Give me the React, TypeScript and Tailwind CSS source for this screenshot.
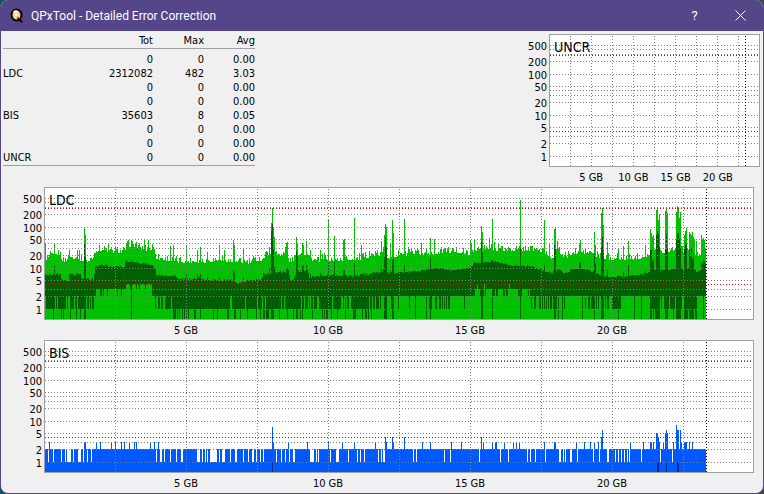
import { useId } from 'react';

type Point = [x: number, y: number];
type Peak = [x: number, max: number, avg: number];
type Column = { max: number; avg: number; min: number };

const PLOT_HEIGHT = 131;
const COLUMNS = 661;

const GRID_ROWS = [10, 14, 19, 26, 39, 51, 55, 60, 67, 80, 92, 101, 108, 121];
const LIMIT_ROWS = [20, 96];

const Y_TICKS = [
	{ label: '500', y: 11 },
	{ label: '200', y: 27 },
	{ label: '100', y: 40 },
	{ label: '50', y: 52 },
	{ label: '20', y: 68 },
	{ label: '10', y: 81 },
	{ label: '5', y: 93 },
	{ label: '2', y: 109 },
	{ label: '1', y: 122 },
];

const X_TICKS = [
	{ label: '5 GB', x: '20%' },
	{ label: '10 GB', x: '40%' },
	{ label: '15 GB', x: '60%' },
	{ label: '20 GB', x: '80%' },
];

const TOTALS = [
	{ name: '', tot: '0', max: '0', avg: '0.00' },
	{ name: 'LDC', tot: '2312082', max: '482', avg: '3.03' },
	{ name: '', tot: '0', max: '0', avg: '0.00' },
	{ name: '', tot: '0', max: '0', avg: '0.00' },
	{ name: 'BIS', tot: '35603', max: '8', avg: '0.05' },
	{ name: '', tot: '0', max: '0', avg: '0.00' },
	{ name: '', tot: '0', max: '0', avg: '0.00' },
	{ name: 'UNCR', tot: '0', max: '0', avg: '0.00' },
];

// column heights are in plot units, 41 units per decade
const LDC_MAX: Point[] = [
	[0, 61], [8, 62], [14, 66], [18, 58], [24, 62], [30, 62], [36, 60], [43, 58], [47, 61], [50, 68], [55, 70],
	[66, 68], [79, 68], [82, 74], [90, 74], [97, 70], [109, 70], [111, 62], [120, 60], [135, 58], [155, 58],
	[170, 59], [176, 60], [190, 57], [204, 57], [212, 60], [217, 60], [222, 66], [232, 65], [240, 66], [245, 57],
	[253, 66], [262, 66], [266, 60], [273, 58], [280, 63], [285, 59], [300, 60], [316, 61], [330, 65], [336, 64],
	[345, 62], [355, 65], [375, 65], [388, 66], [400, 68], [415, 68], [423, 65], [430, 70], [445, 71], [455, 70],
	[470, 70], [490, 70], [500, 67], [507, 61], [512, 69], [520, 62], [530, 67], [546, 67], [552, 63], [562, 61],
	[572, 61], [584, 60], [598, 63], [606, 66], [618, 68], [628, 70], [636, 68], [645, 66], [652, 65], [660, 66],
];

const LDC_AVG: Point[] = [
	[0, 45], [15, 45], [16, 39], [23, 39], [24, 45], [35, 45], [36, 40], [48, 40], [50, 52], [55, 54], [79, 52],
	[80, 58], [95, 56], [107, 54], [110, 50], [111, 44], [130, 43], [133, 40], [152, 40], [154, 43], [157, 39],
	[186, 39], [192, 36], [200, 38], [216, 39], [218, 45], [228, 46], [243, 48], [245, 38], [248, 40], [252, 47],
	[262, 48], [264, 42], [284, 44], [308, 43], [320, 45], [334, 47], [350, 46], [375, 48], [395, 51], [405, 49],
	[425, 51], [430, 56], [447, 58], [455, 56], [468, 53], [485, 53], [495, 49], [505, 46], [512, 50], [520, 46],
	[528, 50], [540, 50], [552, 45], [565, 42], [580, 43], [598, 45], [606, 49], [628, 50], [645, 50], [652, 47],
	[660, 55],
];

const LDC_PEAKS: Peak[] = [
	[0, 76, 45], [5, 68, 45], [9, 76, 53], [24, 69, 45], [32, 69, 45], [34, 69, 45], [39, 92, 76], [40, 84, 62],
	[63, 76, 52], [82, 78, 58], [86, 79, 59], [91, 77, 57], [99, 79, 56], [103, 79, 55], [107, 75, 54],
	[125, 73, 43], [128, 74, 43], [141, 74, 46], [152, 69, 45], [155, 72, 45], [162, 67, 42], [174, 74, 42],
	[179, 69, 40], [188, 79, 49], [189, 74, 46], [198, 71, 42], [220, 67, 45], [224, 72, 51], [226, 96, 88],
	[227, 111, 95], [228, 92, 71], [229, 82, 52], [240, 72, 46], [241, 76, 50], [242, 77, 51], [251, 82, 68],
	[252, 75, 62], [257, 76, 54], [258, 74, 53], [261, 78, 54], [265, 69, 45], [275, 69, 46], [283, 100, 56],
	[289, 83, 57], [298, 79, 48], [299, 80, 49], [309, 101, 56], [316, 74, 45], [324, 68, 45], [336, 78, 53],
	[338, 72, 50], [339, 84, 62], [340, 95, 82], [341, 92, 72], [345, 75, 48], [347, 99, 59], [348, 86, 60],
	[359, 100, 54], [363, 72, 48], [376, 76, 49], [381, 70, 50], [385, 81, 61], [389, 80, 51], [400, 71, 49],
	[425, 79, 52], [426, 75, 53], [429, 80, 57], [436, 93, 77], [437, 87, 67], [444, 81, 57], [447, 100, 59],
	[449, 77, 58], [453, 75, 57], [475, 119, 71], [499, 99, 54], [504, 76, 48], [509, 90, 74], [510, 92, 71],
	[512, 78, 50], [534, 76, 56], [535, 79, 57], [549, 87, 65], [550, 74, 55], [556, 106, 72], [557, 111, 82],
	[558, 94, 66], [562, 77, 49], [573, 71, 44], [578, 73, 47], [583, 78, 54], [600, 74, 48], [605, 90, 69],
	[606, 86, 71], [607, 82, 58], [608, 84, 60], [611, 109, 84], [612, 110, 88], [613, 99, 86], [614, 105, 72],
	[620, 108, 70], [621, 111, 85], [622, 106, 71], [627, 72, 50], [631, 107, 79], [632, 113, 86], [633, 111, 86],
	[634, 101, 80], [635, 107, 71], [637, 73, 51], [639, 84, 71], [640, 88, 75], [641, 91, 76], [642, 71, 51],
	[644, 87, 70], [645, 85, 64], [646, 84, 71], [647, 87, 60], [648, 82, 66], [649, 80, 50], [651, 78, 47],
	[656, 84, 57], [657, 80, 55], [658, 81, 59], [659, 79, 58],
];

// [first column, chance of 35, of 30, of 23, of 10], the rest reaches the floor
const LDC_MIN: number[][] = [
	[0, 0, 0, 0.35, 0.6],
	[50, 0, 0.75, 0.25, 0],
	[81, 0.8, 0.2, 0, 0],
	[107, 0, 0, 0.6, 0.4],
	[128, 0, 0, 0.04, 0.68],
	[212, 0, 0, 0.18, 0.62],
	[335, 0, 0, 0.82, 0.12],
	[385, 0, 0, 0.4, 0.6],
	[410, 0, 0, 0.97, 0.03],
	[430, 0.06, 0.66, 0.28, 0],
	[485, 0, 0, 0.45, 0.5],
	[512, 0, 0, 0.85, 0.1],
	[540, 0, 0, 0.6, 0.35],
	[567, 0, 0, 0, 0.95],
	[576, 0, 0, 0.85, 0.08],
	[600, 0, 0, 0.6, 0.3],
];

const BIS_GAPS: Point[] = [
	[3, 1], [8, 1], [16, 1], [20, 1], [22, 4], [28, 1], [33, 3], [38, 1], [42, 1], [46, 1], [111, 1], [115, 2],
	[119, 1], [125, 1], [131, 1], [136, 2], [152, 3], [157, 1], [160, 1], [162, 1], [165, 7], [174, 1], [177, 3],
	[185, 1], [190, 2], [198, 1], [203, 1], [207, 2], [211, 1], [215, 1], [218, 1], [231, 1], [236, 1], [240, 1],
	[244, 1], [248, 2], [265, 4], [271, 1], [273, 1], [285, 1], [291, 3], [303, 1], [309, 1], [312, 1], [315, 1],
	[319, 1], [333, 1], [336, 1], [338, 2], [368, 1], [371, 1], [399, 1], [405, 1], [434, 1], [455, 1], [463, 1],
	[482, 1], [485, 1], [490, 1], [500, 1], [514, 2], [518, 1], [520, 1], [525, 2], [532, 1], [548, 1], [554, 1],
	[562, 2], [570, 1], [573, 1], [576, 1], [579, 1], [582, 1], [584, 1], [596, 1], [615, 1], [627, 1],
];

const BIS_PEAKS: Peak[] = [
	[4, 30, 0], [39, 30, 0], [40, 30, 0], [51, 30, 0], [55, 30, 0], [66, 30, 0], [70, 30, 0], [76, 30, 0],
	[79, 30, 0], [84, 30, 0], [89, 30, 0], [91, 30, 0], [105, 30, 0], [109, 30, 0], [113, 30, 0], [227, 45, 10],
	[228, 29, 0], [243, 30, 0], [262, 30, 0], [283, 30, 0], [297, 30, 0], [309, 30, 0], [330, 30, 0],
	[340, 35, 0], [341, 30, 0], [347, 35, 0], [348, 30, 0], [359, 35, 0], [377, 30, 0], [385, 30, 0],
	[406, 30, 0], [416, 30, 0], [436, 35, 0], [438, 30, 0], [447, 30, 0], [450, 30, 0], [451, 30, 0],
	[459, 30, 0], [468, 30, 0], [471, 30, 0], [474, 30, 0], [499, 30, 0], [509, 30, 0], [510, 30, 0],
	[531, 30, 0], [539, 30, 0], [545, 30, 0], [549, 30, 0], [553, 30, 0], [556, 35, 0], [557, 42, 0],
	[585, 30, 0], [598, 30, 0], [605, 30, 0], [606, 30, 0], [608, 30, 0], [611, 39, 0], [612, 39, 10],
	[613, 35, 10], [614, 30, 0], [618, 30, 0], [620, 39, 0], [621, 42, 10], [622, 39, 0], [628, 30, 0],
	[631, 47, 0], [632, 42, 10], [633, 42, 10], [635, 42, 0], [636, 30, 0], [639, 30, 0], [640, 30, 0],
	[641, 30, 0], [644, 30, 0], [647, 30, 0],
];

const noise = (n: number) => {
	const value = Math.sin(n * 127.1 + 311.7) * 43758.5453;
	return value - Math.floor(value);
};

const interpolate = (points: Point[], x: number) => {
	const next = points.findIndex(([px]) => px >= x);
	if (next <= 0) return points[0][1];
	const [x0, y0] = points[next - 1];
	const [x1, y1] = points[next];
	return y0 + ((y1 - y0) * (x - x0)) / (x1 - x0);
};

const minLevel = (x: number) => {
	const zone = LDC_MIN.filter(([start]) => start <= x).pop() ?? LDC_MIN[0];
	let roll = noise(x + 5000);
	for (const [i, level] of [35, 30, 23, 10].entries()) {
		roll -= zone[i + 1];
		if (roll < 0) return level;
	}
	return 0;
};

const ldcColumns: Column[] = Array.from({ length: COLUMNS }, (_, x) => {
	const peak = LDC_PEAKS.find(([px]) => px === x);
	if (peak) return { max: peak[1], avg: peak[2], min: peak[2] >= 59 ? 0 : minLevel(x) };
	const roll = noise(x);
	return {
		max: Math.round(interpolate(LDC_MAX, x) - 2 + roll * roll * 7),
		avg: Math.round(interpolate(LDC_AVG, x) - 1 + noise(x + 900) * 2),
		min: minLevel(x),
	};
});

const bisColumns: Column[] = Array.from({ length: COLUMNS }, (_, x) => {
	const peak = BIS_PEAKS.find(([px]) => px === x);
	const gap = BIS_GAPS.some(([start, size]) => x >= start && x < start + size);
	return { max: peak ? peak[1] : gap ? 10 : 23, avg: peak ? peak[2] : 0, min: 0 };
});

const barsPath = (columns: Column[], key: keyof Column) =>
	columns.map((column, x) => (column[key] > 0 ? `M${x} ${PLOT_HEIGHT}v-${column[key]}h1v${column[key]}z` : '')).join('');

interface ChartProps {
	title: string;
	span: number;
	end: number;
	columns?: Column[];
	colors?: [max: string, avg: string, min: string];
}

const Chart = ({ title, span, end, columns = [], colors = ['#00c000', '#006000', '#00c000'] }: ChartProps) => {
	const titleId = useId();
	const step = Math.floor((span + 2) / 10);

	return (
		<figure className="flex w-full" aria-labelledby={titleId}>
			<svg className="h-[133px] w-[43px] shrink-0 text-[11px]" aria-hidden="true">
				{Y_TICKS.map(({ label, y }) => (
					<text key={label} x="41" y={y + 5} textAnchor="end">
						{label}
					</text>
				))}
			</svg>
			<div className="min-w-0 flex-1">
				<div className="relative border border-[#a0a0a0] bg-white">
					<svg
						className="block h-[131px] w-full"
						viewBox={`0 0 ${span} ${PLOT_HEIGHT}`}
						preserveAspectRatio="none"
						shapeRendering="crispEdges"
					>
						<path d={barsPath(columns, 'max')} fill={colors[0]} />
						<path d={barsPath(columns, 'avg')} fill={colors[1]} />
						<path d={barsPath(columns, 'min')} fill={colors[2]} />
						<g stroke="#808080" strokeDasharray="1 2">
							{GRID_ROWS.map((y) => (
								<line key={y} x1="0" x2={span} y1={y + 0.5} y2={y + 0.5} />
							))}
							{Array.from({ length: 9 }, (_, i) => (i + 1) * step - 0.5).map((x) => (
								<line key={x} x1={x} x2={x} y1="1" y2={PLOT_HEIGHT} />
							))}
						</g>
						<g stroke="#e00000" strokeDasharray="1 2">
							{LIMIT_ROWS.map((y) => (
								<line key={y} x1="0" x2={span} y1={y + 0.5} y2={y + 0.5} />
							))}
						</g>
						<line x1={end + 0.5} x2={end + 0.5} y1="1" y2={PLOT_HEIGHT} stroke="#000" strokeDasharray="1 2" />
					</svg>
					<figcaption id={titleId} className="absolute top-1 left-1 text-[14px] leading-4">
						{title}
					</figcaption>
				</div>
				<svg className="block h-5 w-full overflow-visible text-[11px]">
					{X_TICKS.map(({ label, x }) => (
						<text key={label} x={x} y="14" textAnchor="middle">
							{label}
						</text>
					))}
				</svg>
			</div>
		</figure>
	);
};

const Logo = () => (
	<svg className="size-4" viewBox="0 0 16 16" aria-hidden="true">
		<ellipse cx="7.500" cy="7" rx="5" ry="5.500" fill="#fbd27a" stroke="#000" strokeWidth="2" />
		<path d="M7.500 7L4 3.500a4.500 4.500 0 0 1 4.500-1z" fill="#fff6dc" />
		<path d="M7.500 7l4 2.500a4.500 4.500 0 0 1-4 2z" fill="#f4a838" />
		<circle cx="7.500" cy="7" r="1.500" fill="#fff" />
		<path d="M8.500 10.500c2 .5 2 3 5 3.500" fill="none" stroke="#000" strokeWidth="2" />
	</svg>
);

const TitleBar = () => (
	<header className="flex h-[31px] items-center bg-[#554589] pl-2 font-[Roboto,sans-serif] text-white">
		<Logo />
		<h1 className="ml-[6px] flex-1 text-[12px] leading-4">QPxTool - Detailed Error Correction</h1>
		<button type="button" aria-label="Help" className="flex h-full w-[45px] items-center justify-center text-[13px]">
			?
		</button>
		<button type="button" aria-label="Close" className="flex h-full w-[46px] items-center justify-center">
			<svg className="size-[11px]" viewBox="0 0 11 11" stroke="currentColor" aria-hidden="true">
				<path d="M.5.5l10 10M10.500.5l-10 10" />
			</svg>
		</button>
	</header>
);

const TotalsTable = () => (
	<table className="w-[252px] table-fixed border-b border-[#a0a0a0] text-right text-[11px] leading-[14px]">
		<thead>
			<tr className="border-b border-[#a0a0a0]">
				<th className="w-[80px]" />
				<th className="font-normal">Tot</th>
				<th className="w-[51px] font-normal">Max</th>
				<th className="w-[51px] font-normal">Avg</th>
			</tr>
		</thead>
		<tbody className="before:block before:h-1">
			{TOTALS.map(({ name, tot, max, avg }, i) => (
				<tr key={i}>
					<th className="text-left font-normal">{name}</th>
					<td>{tot}</td>
					<td>{max}</td>
					<td>{avg}</td>
				</tr>
			))}
		</tbody>
	</table>
);

export default function App() {
	return (
		<div className="min-h-screen bg-linear-to-r from-[#0f5a54] to-[#3a4444]">
			<div className="flex min-h-screen flex-col overflow-hidden rounded-lg border-x border-b border-[#554589] bg-[#f0f0f0] font-['DejaVu_Sans_Condensed','DejaVu_Sans',sans-serif] text-black">
				<TitleBar />
				<main className="pt-[3px]">
					<div className="flex items-start justify-between pr-[3px] pl-[2px]">
						<TotalsTable />
						<div className="w-[254px] shrink-0">
							<Chart title="UNCR" span={209} end={195} />
						</div>
					</div>
					<div className="pr-[9px]">
						<Chart title="LDC" span={708} end={661} columns={ldcColumns} />
						<Chart
							title="BIS"
							span={708}
							end={661}
							columns={bisColumns}
							colors={['#0058ff', '#002c80', '#0058ff']}
						/>
					</div>
				</main>
			</div>
		</div>
	);
}
